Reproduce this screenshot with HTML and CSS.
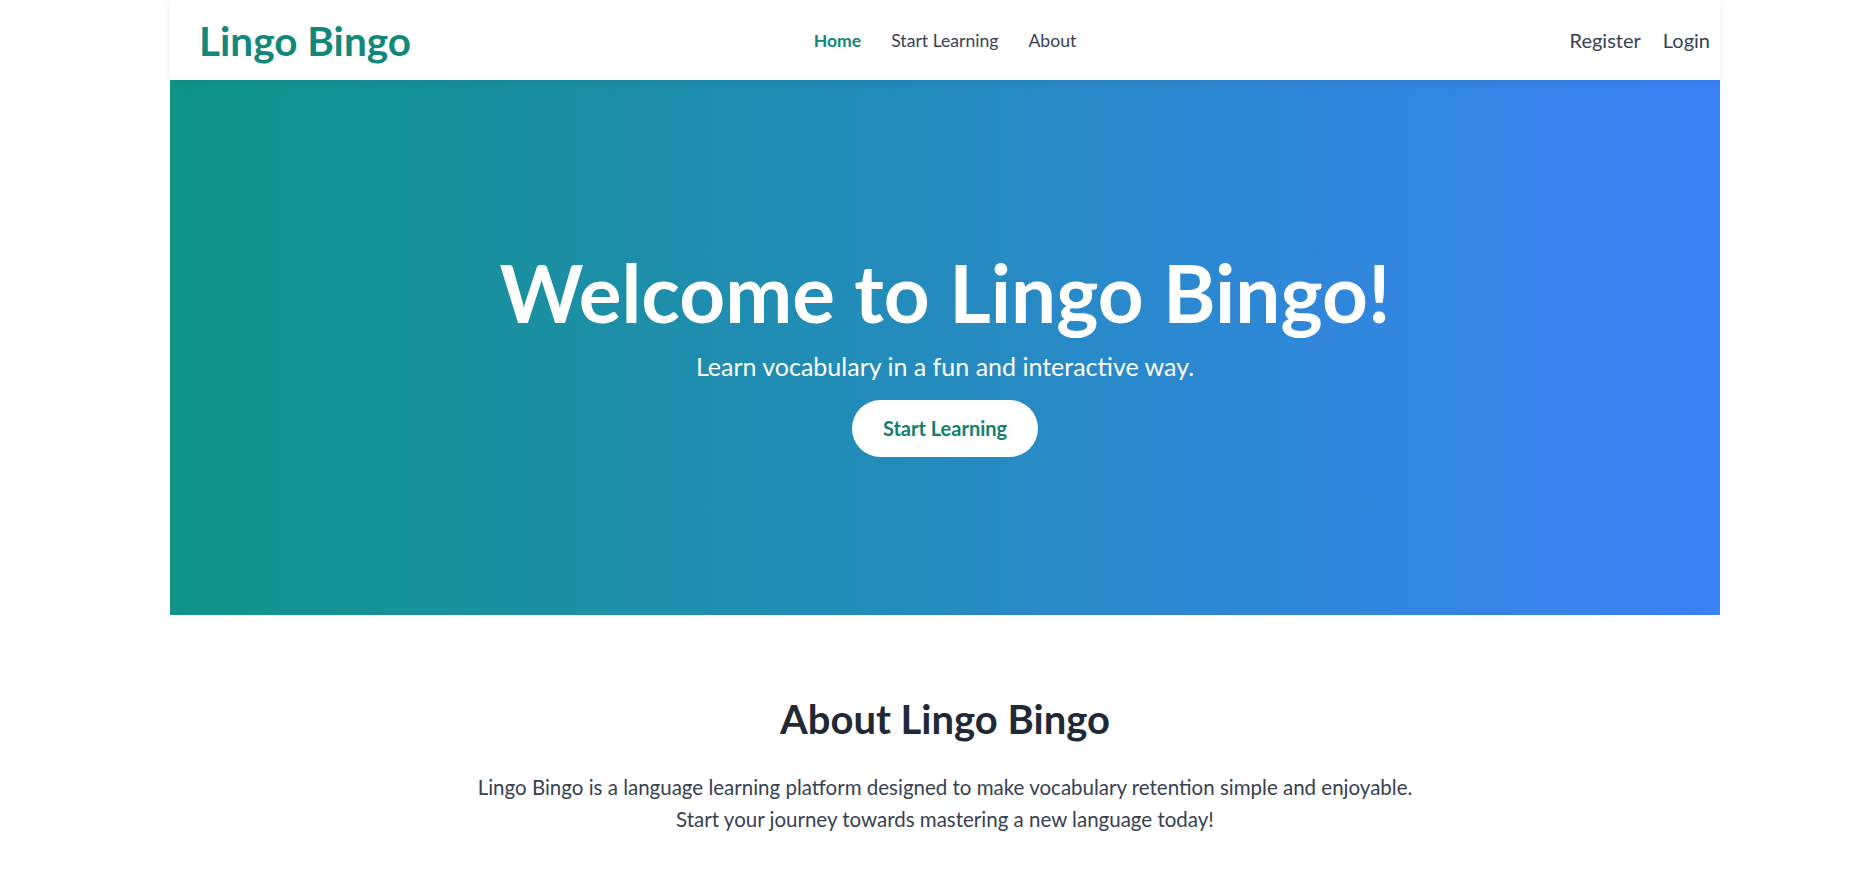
FILE: index.html
```html
<!DOCTYPE html>
<html lang="en">
<head>
<meta charset="utf-8">
<title>Lingo Bingo</title>
<link rel="stylesheet" href="styles.css">
</head>
<body>
<div class="page">
  <header class="header">
    <a class="logo" href="#">Lingo Bingo</a>
    <nav class="nav">
      <a class="nav-link active" href="#">Home</a>
      <a class="nav-link" href="#">Start Learning</a>
      <a class="nav-link" href="#">About</a>
    </nav>
    <div class="auth">
      <a class="auth-link" href="#">Register</a>
      <a class="auth-link" href="#">Login</a>
    </div>
  </header>
  <section class="hero">
    <h1 class="hero-title">Welcome to Lingo Bingo!</h1>
    <p class="hero-sub">Learn vocabulary in a fun and interactive way.</p>
    <a class="hero-btn" href="#">Start Learning</a>
  </section>
  <section class="about">
    <h2 class="about-title">About Lingo Bingo</h2>
    <p class="about-text">Lingo Bingo is a language learning platform designed to make vocabulary retention simple and enjoyable.<br>Start your journey towards mastering a new language today!</p>
  </section>
</div>
</body>
</html>
```
FILE: styles.css
```css
* { box-sizing: border-box; }
html, body { margin: 0; padding: 0; background: #ffffff; }
body {
  font-family: Lato, "Liberation Sans", sans-serif;
  color: #374151;
}
a { text-decoration: none; }

.page {
  width: 1550px;
  margin-left: 170px;
}

.header {
  height: 80px;
  display: grid;
  grid-template-columns: 1fr auto 1fr;
  align-items: center;
  padding: 0 10px;
  background: #ffffff;
  box-shadow: 0 2px 8px rgba(0, 0, 0, 0.08);
  position: relative;
  z-index: 1;
}
.logo {
  justify-self: start;
  margin-left: 19px;
  font-size: 40.5px;
  font-weight: 700;
  color: #11887b;
}
.nav {
  display: flex;
  gap: 30px;
}
.nav-link {
  font-size: 17.6px;
  color: #374151;
}
.nav-link.active {
  color: #11887b;
  font-weight: 700;
}
.auth {
  justify-self: end;
  display: flex;
  gap: 22px;
}
.auth-link {
  font-size: 20px;
  color: #374151;
}

.hero {
  height: 535px;
  padding-top: 172px;
  display: flex;
  flex-direction: column;
  align-items: center;
  background: linear-gradient(to right, #0f9488, #3b82f6);
  color: #ffffff;
}
.hero-title {
  margin: 0;
  font-size: 80px;
  line-height: 1;
  font-weight: 700;
}
.hero-sub {
  margin: 19px 0 0;
  font-size: 25px;
  line-height: 30px;
}
.hero-btn {
  margin-top: 19px;
  display: block;
  padding: 16px 31px;
  border-radius: 999px;
  background: #ffffff;
  color: #11806f;
  font-size: 20px;
  line-height: 25px;
  font-weight: 700;
}

.about {
  padding-top: 80px;
  text-align: center;
}
.about-title {
  margin: 0;
  font-size: 40px;
  line-height: 48px;
  font-weight: 700;
  color: #1f2937;
}
.about-text {
  margin: 28px 0 0;
  font-size: 20.5px;
  line-height: 32px;
  color: #374151;
}
```
